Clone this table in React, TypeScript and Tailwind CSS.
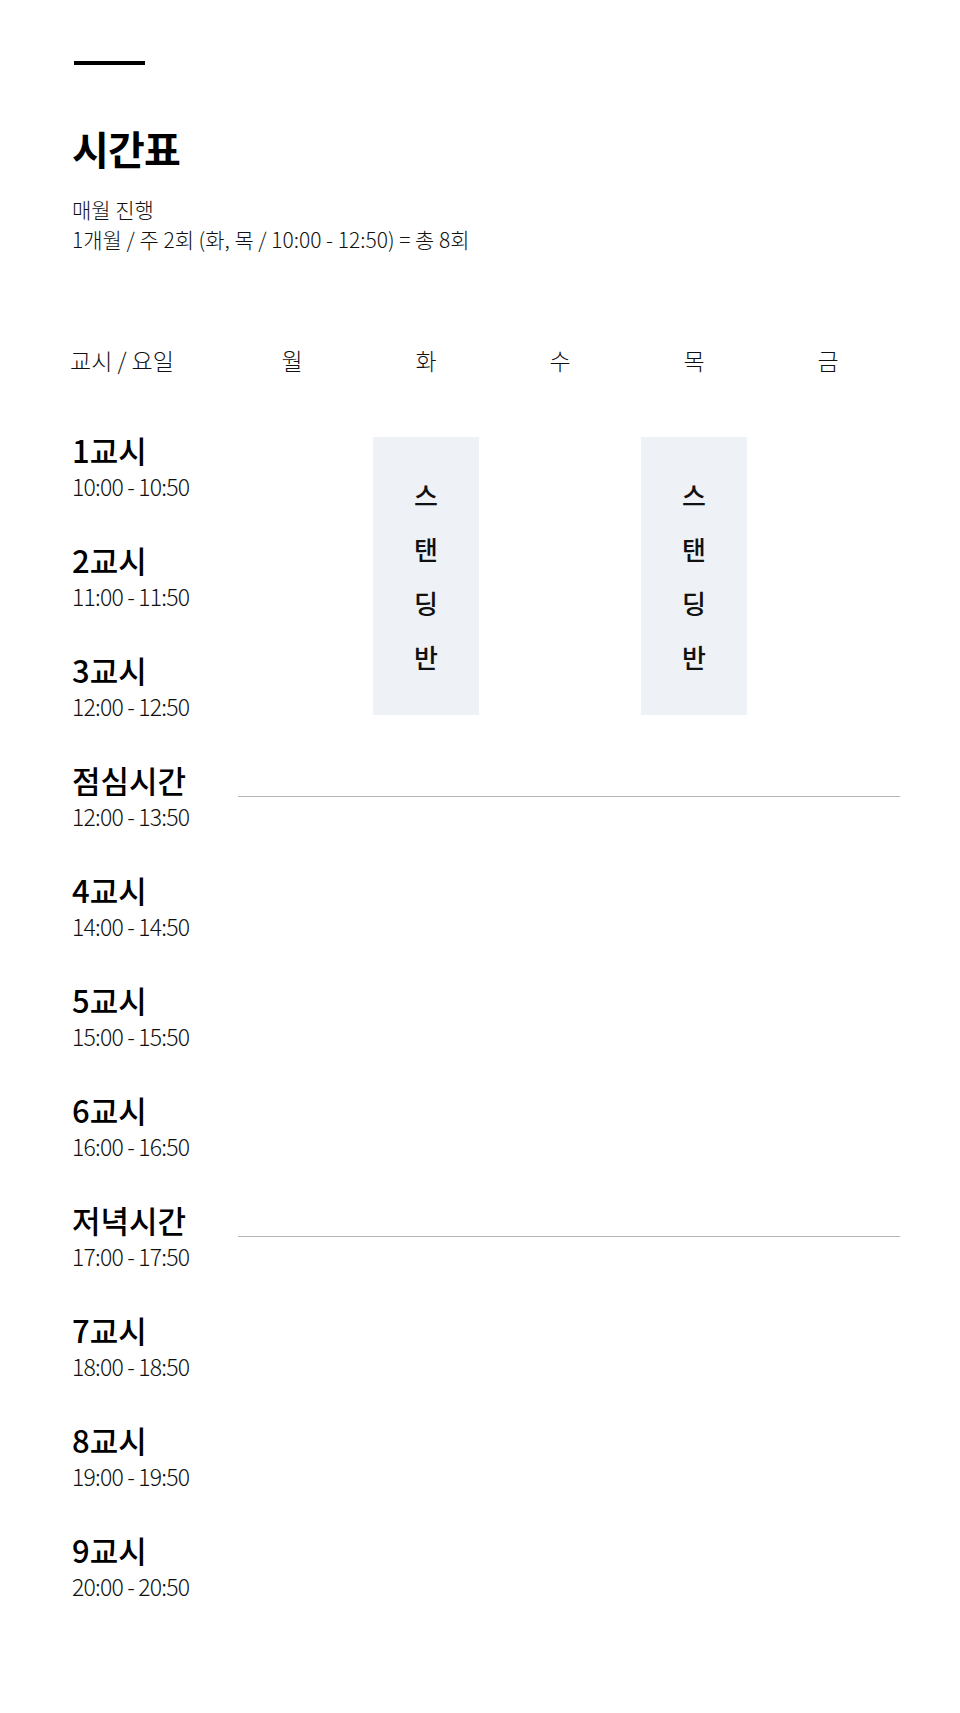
import React from "react";

const days = ["월", "화", "수", "목", "금"];

type Row = { label: string; time: string; line?: boolean };

const rows: Row[] = [
  { label: "1교시", time: "10:00 - 10:50" },
  { label: "2교시", time: "11:00 - 11:50" },
  { label: "3교시", time: "12:00 - 12:50" },
  { label: "점심시간", time: "12:00 - 13:50", line: true },
  { label: "4교시", time: "14:00 - 14:50" },
  { label: "5교시", time: "15:00 - 15:50" },
  { label: "6교시", time: "16:00 - 16:50" },
  { label: "저녁시간", time: "17:00 - 17:50", line: true },
  { label: "7교시", time: "18:00 - 18:50" },
  { label: "8교시", time: "19:00 - 19:50" },
  { label: "9교시", time: "20:00 - 20:50" },
];

const rowStart = [
  "row-start-1",
  "row-start-2",
  "row-start-3",
  "row-start-4",
  "row-start-5",
  "row-start-6",
  "row-start-7",
  "row-start-8",
  "row-start-9",
  "row-start-10",
  "row-start-11",
];

function Box({ col }: { col: string }) {
  return (
    <div
      className={`${col} row-start-1 row-span-3 self-start justify-self-center h-[278px] w-[106px] bg-[#eef1f5] flex flex-col items-center justify-center text-[26px] leading-[54px] font-medium text-[#111]`}
    >
      <span>스</span>
      <span>탠</span>
      <span>딩</span>
      <span>반</span>
    </div>
  );
}

export default function App() {
  return (
    <div className="min-h-[1713px] bg-white pl-[72px] pt-[61px] text-black font-['Noto_Sans_CJK_KR','Noto_Sans',sans-serif]">
      <div className="ml-[2px] h-[4px] w-[71px] bg-black" />
      <h1 className="mt-[59px] text-[40px] leading-[48px] font-bold tracking-[-0.02em]">
        시간표
      </h1>
      <div className="mt-[22px] text-[21px] leading-[30px] font-light text-[#111]">
        <p>매월 진행</p>
        <p>1개월 / 주 2회 (화, 목 / 10:00 - 12:50) = 총 8회</p>
      </div>

      <div className="mt-[91px] grid grid-cols-[153px_repeat(5,134px)] text-[23px] leading-[30px] font-light text-[#111]">
        <div className="-ml-[2px]">교시 / 요일</div>
        {days.map((d) => (
          <div key={d} className="text-center">
            {d}
          </div>
        ))}
      </div>

      <div className="mt-[62px] grid grid-cols-[153px_repeat(5,134px)] grid-rows-[repeat(10,110px)_66px]">
        <Box col="col-start-3" />
        <Box col="col-start-5" />
        {rows.map((r, i) => (
          <React.Fragment key={r.label}>
            <div className={`${rowStart[i]} col-start-1 flex flex-col`}>
              <span className="text-[31px] leading-[26px] font-medium whitespace-nowrap">
                {r.label}
              </span>
              <span className="mt-[8px] text-[23px] leading-[30px] font-light tracking-[-0.035em] text-[#111] whitespace-nowrap">
                {r.time}
              </span>
            </div>
            {r.line && (
              <div
                className={`${rowStart[i]} col-start-2 col-span-5 self-start ml-[13px] mr-[-5px] mt-[29px] h-px bg-[#b4b4b4]`}
              />
            )}
          </React.Fragment>
        ))}
      </div>
    </div>
  );
}
